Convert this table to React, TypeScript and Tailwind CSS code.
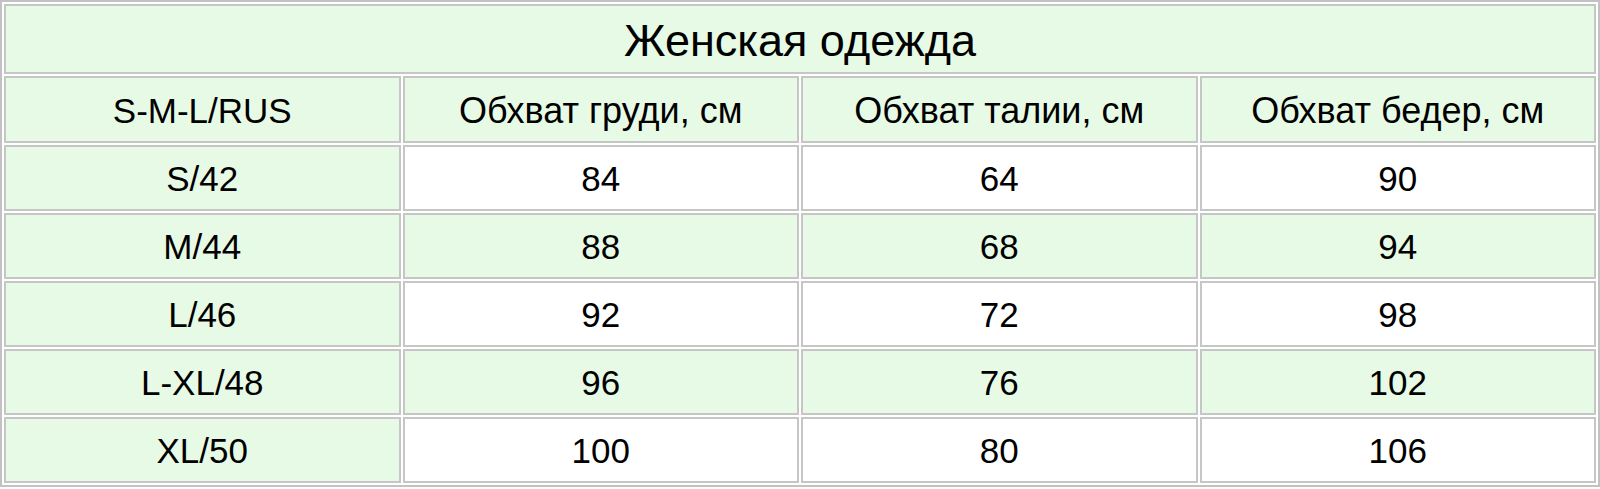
import React from 'react';

interface SizeRow {
  size: string;
  chest: number;
  waist: number;
  hips: number;
  shaded: boolean;
}

const rows: SizeRow[] = [
  { size: 'S/42', chest: 84, waist: 64, hips: 90, shaded: false },
  { size: 'M/44', chest: 88, waist: 68, hips: 94, shaded: true },
  { size: 'L/46', chest: 92, waist: 72, hips: 98, shaded: false },
  { size: 'L-XL/48', chest: 96, waist: 76, hips: 102, shaded: true },
  { size: 'XL/50', chest: 100, waist: 80, hips: 106, shaded: false },
];

const cell = 'border-2 border-[#c6c6c6] text-center align-middle leading-[1.15] pt-[3px] pb-0 px-0';

export default function App() {
  return (
    <div className="w-[1600px] h-[489px] bg-white font-['Liberation_Sans',Arial,sans-serif] text-black">
      <table className="w-full border-separate border-spacing-[2px] border-2 border-[#c2c2c2] table-fixed">
        <tbody>
          <tr className="h-[70px]">
            <td colSpan={4} className={`${cell} bg-[#e7fae5] text-[45px]`}>
              Женская одежда
            </td>
          </tr>
          <tr className="h-[67px] text-[36px]">
            <td className={`${cell} bg-[#e7fae5] text-[35px]`}>S-M-L/RUS</td>
            <td className={`${cell} bg-[#e7fae5]`}>Обхват груди, см</td>
            <td className={`${cell} bg-[#e7fae5]`}>Обхват талии, см</td>
            <td className={`${cell} bg-[#e7fae5]`}>Обхват бедер, см</td>
          </tr>
          {rows.map((r) => {
            const bg = r.shaded ? 'bg-[#e7fae5]' : 'bg-white';
            return (
              <tr key={r.size} className="h-[66px] text-[35px]">
                <td className={`${cell} bg-[#e7fae5]`}>{r.size}</td>
                <td className={`${cell} ${bg}`}>{r.chest}</td>
                <td className={`${cell} ${bg}`}>{r.waist}</td>
                <td className={`${cell} ${bg}`}>{r.hips}</td>
              </tr>
            );
          })}
        </tbody>
      </table>
    </div>
  );
}
